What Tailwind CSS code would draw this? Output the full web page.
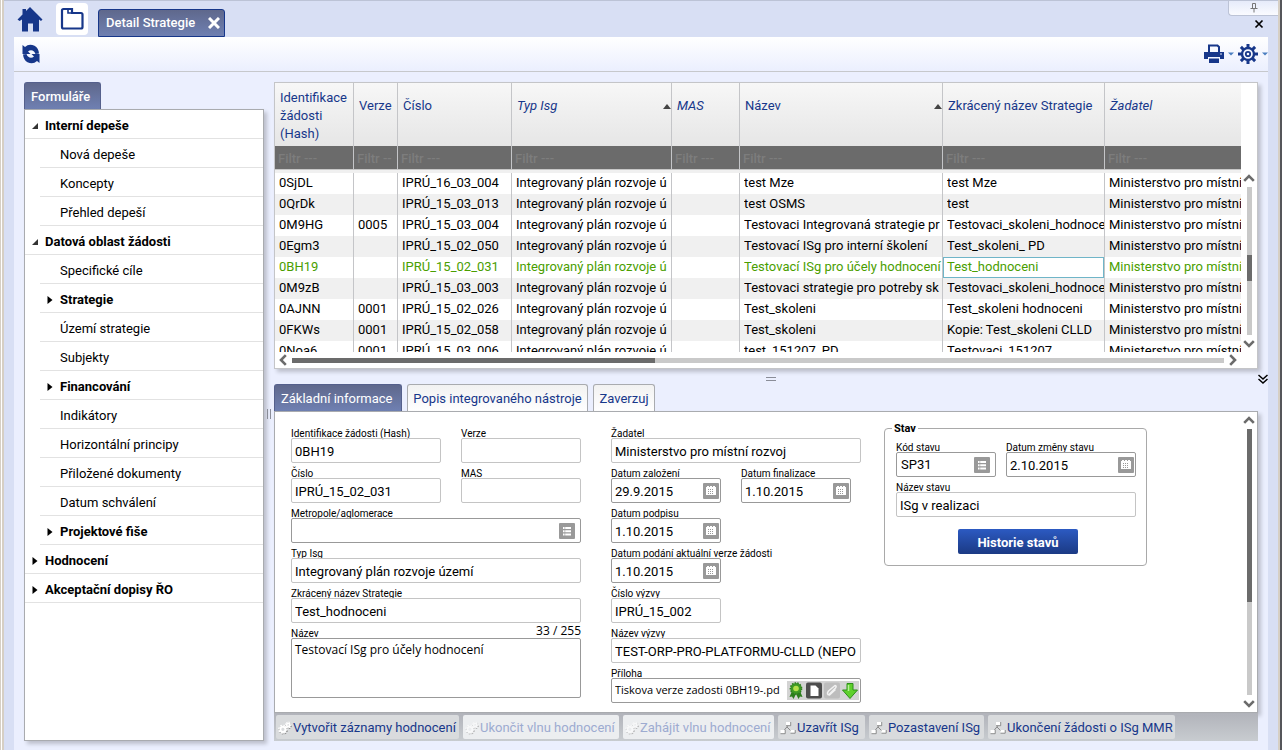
<!DOCTYPE html>
<html lang="cs">
<head>
<meta charset="utf-8">
<title>Detail Strategie</title>
<script src="https://cdn.jsdelivr.net/npm/@tailwindcss/browser@4"></script>
</head>
<body class="h-screen overflow-hidden border-r-2 border-l border-l-[#d6cfc4] border-r-[#55565a] bg-white pl-px font-['Roboto',sans-serif] text-[13px] text-black">
<svg class="hidden">
  <symbol id="i-list" viewBox="0 0 16 16"><rect width="16" height="16" rx="1" fill="#999"/><path d="M4 4h1.6v2H4zM4 7.2h1.6v2H4zM4 10.4h1.6v2H4zM6.2 4H12v2H6.2zM6.2 7.2H12v2H6.2zM6.2 10.4H12v2H6.2z" fill="#fff"/></symbol>
  <symbol id="i-cal" viewBox="0 0 16 16"><rect width="16" height="16" rx="1" fill="#999"/><path d="M3 4h1v-1h2v1h1v-1h2v1h1v-1h2v1h1v8H3z" fill="#fff"/><path d="M5 6.500h6M5 8.500h6M5 10.500h6" stroke="#999" stroke-width="1" stroke-dasharray="1 1"/></symbol>
  <symbol id="i-gears" viewBox="0 0 14 14"><g fill="none" stroke="#777"><circle cx="5.300" cy="9" r="3.600" stroke-width="1.800" stroke-dasharray="1.600 1.200"/><circle cx="10.800" cy="4.700" r="2.400" stroke-width="1.600" stroke-dasharray="1.200 1"/></g><g fill="none" stroke="#fff"><circle cx="4.900" cy="8.300" r="2.600" stroke-width="2"/><circle cx="4.900" cy="8.300" r="4" stroke-width="1.400" stroke-dasharray="1.600 1.540"/><circle cx="10.200" cy="4" r="1.600" stroke-width="1.600"/><circle cx="10.200" cy="4" r="2.800" stroke-width="1.200" stroke-dasharray="1.200 1"/></g></symbol>
  <symbol id="i-flow" viewBox="0 0 16 14"><path d="M8 4.500 4 9.500M7 6l4.500 4.500" fill="none" stroke="#8a8a8a"/><path d="M6 1h4.500v3.500H6zM.5 9H5v3.500H.5zM10.500 9H15v3h-4.500z" fill="#fff"/><path d="M6 4.700h4.700V1M.5 12.700h4.700V9M10.500 12.200h4.700V9" fill="none" stroke="#777" stroke-width=".8"/></symbol>
  <symbol id="i-up" viewBox="0 0 12 8"><path d="M1.200 6.800 6 2l4.800 4.800" fill="none" stroke="#6b6b6b" stroke-width="2.600"/></symbol>
  <symbol id="i-down" viewBox="0 0 12 8"><path d="M1.200 1.200 6 6l4.800-4.800" fill="none" stroke="#6b6b6b" stroke-width="2.600"/></symbol>
</svg>

<div class="flex h-full flex-col border-x-2 border-x-[#d6cfc4] bg-[#d8dff4]">
<header class="flex h-[37px] shrink-0 items-end border-t border-[#bcc3d6] pl-3">
  <button aria-label="Domů" class="mb-1 h-7 w-7"><svg viewBox="0 0 28 28" class="h-7 w-7" fill="#17378a"><path d="M14 2 26.500 14.500l-1.500 1.500-2-1.500V26.500h-6v-8h-5v8H6V14.500L3.500 16 1.500 14.500 6.500 9.500V4H10v2z"/></svg></button>
  <button aria-label="Složky" class="mb-0.5 ml-3 flex h-8 w-8 items-center justify-center rounded bg-white"><svg viewBox="0 0 24 24" class="h-6 w-6" fill="none" stroke="#17378a" stroke-width="2.200"><path d="M2 3.500q0-1.500 1.500-1.500H12v4h9q1.500 0 1.500 1.500v12.500q0 1.500-1.500 1.500H3.500Q2 21.500 2 20z" /><path d="M8 2v4h5" stroke-width="1.600"/></svg></button>
  <div class="ml-2.5 flex h-7 w-[127px] items-center justify-between rounded-t-[3px] border border-[#17378a] bg-linear-to-b from-[#5f688c] to-[#6f80b2] pr-1 pl-[7px] font-medium text-white">
    <span>Detail Strategie</span>
    <button aria-label="Zavřít kartu"><svg viewBox="0 0 12 12" class="h-3 w-3" stroke="#fff" stroke-width="3"><path d="M1 1l10 10M11 1 1 11"/></svg></button>
  </div>
  <div class="ml-auto flex w-[50px] flex-col items-end justify-between self-stretch">
    <button aria-label="Připnout" class="flex h-[15px] w-[50px] items-center justify-center rounded-bl border-b border-l border-[#bcc3d6] bg-linear-to-b from-[#e6ebfa] to-[#fafbff]"><svg viewBox="0 0 8 10" class="h-2.5 w-2" fill="none" stroke="#777"><path d="M2.500.5h3v5h-3zM.5 5.500h7M4 5.500V9.500"/></svg></button>
    <button aria-label="Zavřít" class="mr-[14px] mb-2"><svg viewBox="0 0 10 10" class="h-2.5 w-2.5" stroke="#000" stroke-width="1.700"><path d="M1.500 1.500l7 7M8.500 1.500l-7 7"/></svg></button>
  </div>
</header>

<div class="mr-2.5 ml-2.5 flex min-h-0 flex-1 flex-col bg-[#ebeffe]">
  <div class="flex h-[35px] shrink-0 items-center justify-between border-b border-[#c6c8cc] bg-linear-to-b from-white to-[#ebeffe] pl-[7px]">
    <button aria-label="Obnovit"><svg viewBox="0 0 20 20" class="h-5 w-5" fill="#17378a"><path d="M1.500 1v9h8L7 7.500q3-2.500 6 0 1 1 1.500 2.500l3.500-.5Q17.500 4 13.500 1.800 8-.8 4 3z"/><path d="M18.500 19v-9h-8l2.500 2.500q-3 2.500-6 0-1-1-1.500-2.500l-3.500.5q.5 5.500 4.500 7.700 5.500 2.600 9.500-1.200z"/></svg></button>
    <div class="flex items-center">
      <button aria-label="Tisk" class="flex items-center gap-1"><svg viewBox="0 0 20 20" class="h-5 w-5"><path d="M5 8V1.500h8.500L15 3v5" fill="none" stroke="#17378a" stroke-width="2"/><path d="M0 8h20v7h-4v-2H4v2H0zM5 14.500h10V19H5z" fill="#17378a"/><circle cx="17" cy="10" r=".8" fill="#fff"/></svg><svg viewBox="0 0 6 4" class="h-1 w-1.5"><path d="M0 .5h6L3 3.500z" fill="#4a7ec0"/></svg></button>
      <button aria-label="Nastavení" class="ml-1 flex items-center gap-1"><svg viewBox="0 0 20 20" class="h-5 w-5" fill="none" stroke="#17378a"><circle cx="10" cy="10" r="6" stroke-width="2.400"/><circle cx="10" cy="10" r="2.200" stroke-width="1.800"/><path d="M10 0v4M10 16v4M0 10h4M16 10h4M2.900 2.900l2.800 2.800M14.300 14.300l2.800 2.800M2.900 17.100l2.800-2.800M14.300 5.700l2.800-2.800" stroke-width="3"/></svg><svg viewBox="0 0 6 4" class="h-1 w-1.5"><path d="M0 .5h6L3 3.500z" fill="#4a7ec0"/></svg></button>
    </div>
  </div>

  <div class="flex min-h-0 flex-1 pt-2.5 pb-[9px] pl-2.5">
    <aside class="flex w-60 shrink-0 flex-col">
      <div class="flex h-[27px] w-[77px] items-center rounded-t-[3px] border border-b-0 border-[#55608c] bg-linear-to-b from-[#5f688c] to-[#6f80b2] pt-0.5 pl-1.5 font-medium text-white">Formuláře</div>
      <nav id="menu" class="flex-1 border border-[#a9abaf] bg-white shadow-[3px_3px_4px_rgba(0,0,0,0.2)]"></nav>
    </aside>
    <div class="flex w-2.5 shrink-0 items-center justify-center pt-1"><div class="h-2.5 w-1 border-x border-[#8a8d98]"></div></div>

    <main class="flex min-w-0 flex-1 flex-col">
      <div class="flex h-[287px] shrink-0">
        <section class="flex min-w-0 flex-1 border border-[#c4c5c8] bg-white shadow-[3px_3px_4px_rgba(0,0,0,0.2)]">
          <div class="flex min-w-0 flex-1 flex-col">
            <div class="min-h-0 flex-1 overflow-hidden">
              <table class="w-full table-fixed border-separate border-spacing-0 text-left">
                <colgroup><col class="w-[79px]"><col class="w-11"><col class="w-[114px]"><col class="w-40"><col class="w-[68px]"><col class="w-[203px]"><col class="w-[162px]"><col></colgroup>
                <thead>
                  <tr class="h-[63px] bg-linear-to-b from-[#f7f7f7] to-[#e6e6e6] text-[#17378a]" id="heads"></tr>
                  <tr class="h-[23px] bg-[#6b6b6b]" id="filters"></tr>
                  <tr class="h-1 bg-[#f0f0f0]"><td colspan="8" class="border-t border-[#c8c8c8] p-0"></td></tr>
                </thead>
                <tbody id="rows"></tbody>
              </table>
            </div>
            <div class="flex h-4 shrink-0 items-center pr-1 pl-1">
              <svg viewBox="0 0 8 12" class="h-3 w-2"><path d="M6.800 1.200 2 6l4.800 4.800" fill="none" stroke="#6b6b6b" stroke-width="2.600"/></svg>
              <div class="mx-[5px] h-[5px] flex-1 bg-[#c9c9c9]"><div class="h-full w-[39%] bg-[#6b6b6b]"></div></div>
              <svg viewBox="0 0 8 12" class="h-3 w-2"><path d="M1.200 1.200 6 6l-4.800 4.800" fill="none" stroke="#6b6b6b" stroke-width="2.600"/></svg>
            </div>
          </div>
          <div class="flex w-4 shrink-0 flex-col items-center pt-[91px] pb-5">
            <svg class="h-2 w-3 shrink-0"><use href="#i-up"/></svg>
            <div class="my-[5px] w-[5px] flex-1 bg-[#c9c9c9] pt-[68px]"><div class="h-[26px] bg-[#6b6b6b]"></div></div>
            <svg class="h-2 w-3 shrink-0"><use href="#i-down"/></svg>
          </div>
        </section>
        <div class="w-2.5 shrink-0"></div>
      </div>

      <div class="flex h-[15px] shrink-0 items-center pt-1 pl-2.5">
        <div class="flex flex-1 justify-center"><div class="h-1 w-2.5 border-y border-[#8a8d98]"></div></div>
        <button aria-label="Sbalit panel" class="w-2.5"><svg viewBox="0 0 10 10" class="h-2.5 w-2.5" fill="none" stroke="#000" stroke-width="1.500"><path d="M.5 1 5 5l4.500-4M.5 5 5 9l4.500-4"/></svg></button>
      </div>

      <div class="flex min-h-0 flex-1 flex-col pr-2.5">
        <div class="flex h-[27px] shrink-0 gap-[5px] whitespace-nowrap text-[#17378a]">
          <button class="w-32 rounded-t-[3px] border border-b-0 border-[#55608c] bg-linear-to-b from-[#5f688c] to-[#6f80b2] pt-0.5 pl-1.5 text-left text-white">Základní informace</button>
          <button class="w-[181px] rounded-t-[3px] border border-b-0 border-[#a9abaf] bg-linear-to-b from-[#f2f2f2] to-white pt-0.5">Popis integrovaného nástroje</button>
          <button class="w-[62px] rounded-t-[3px] border border-b-0 border-[#a9abaf] bg-linear-to-b from-[#f2f2f2] to-white pt-0.5">Zaverzuj</button>
        </div>
        <form class="flex min-h-0 flex-1 justify-between border border-[#a9abaf] bg-white shadow-[3px_3px_4px_rgba(0,0,0,0.2)]">
          <div class="flex items-start pt-[11px] pl-4">
            <div class="w-[290px]">
              <div class="flex gap-5">
                <div class="flex h-10 w-[150px] flex-col pt-1.5"><label for="f1" class="text-[10px] leading-[9px] whitespace-nowrap">Identifikace žádosti (Hash)</label><input id="f1" value="0BH19" class="h-[25px] w-full rounded-[2px] border border-[#c4c4c4] px-[3px] pt-0.5"></div>
                <div class="flex h-10 w-[120px] flex-col pt-1.5"><label for="f2" class="text-[10px] leading-[9px] whitespace-nowrap">Verze</label><input id="f2" class="h-[25px] w-full rounded-[2px] border border-[#c4c4c4] px-[3px] pt-0.5"></div>
              </div>
              <div class="flex gap-5">
                <div class="flex h-10 w-[150px] flex-col pt-1.5"><label for="f3" class="text-[10px] leading-[9px] whitespace-nowrap">Číslo</label><input id="f3" value="IPRÚ_15_02_031" class="h-[25px] w-full rounded-[2px] border border-[#c4c4c4] px-[3px] pt-0.5"></div>
                <div class="flex h-10 w-[120px] flex-col pt-1.5"><label for="f4" class="text-[10px] leading-[9px] whitespace-nowrap">MAS</label><input id="f4" class="h-[25px] w-full rounded-[2px] border border-[#c4c4c4] px-[3px] pt-0.5"></div>
              </div>
              <div class="flex h-10 flex-col pt-1.5"><label for="f5" class="text-[10px] leading-[9px] whitespace-nowrap">Metropole/aglomerace</label><div class="flex h-[25px] items-center rounded-[2px] border border-[#999] pr-[5px]"><input id="f5" class="min-w-0 flex-1 px-[3px] pt-0.5"><button type="button" aria-label="Vybrat metropoli"><svg class="h-4 w-4"><use href="#i-list"/></svg></button></div></div>
              <div class="flex h-10 flex-col pt-1.5"><label for="f6" class="text-[10px] leading-[9px] whitespace-nowrap">Typ Isg</label><input id="f6" value="Integrovaný plán rozvoje území" class="h-[25px] w-full rounded-[2px] border border-[#c4c4c4] px-[3px] pt-0.5"></div>
              <div class="flex h-10 flex-col pt-1.5"><label for="f7" class="text-[10px] leading-[9px] whitespace-nowrap">Zkrácený název Strategie</label><input id="f7" value="Test_hodnoceni" class="h-[25px] w-full rounded-[2px] border border-[#c4c4c4] px-[3px] pt-0.5"></div>
              <div class="flex flex-col pt-1.5"><div class="flex h-[9px] items-end justify-between"><label for="f8" class="text-[10px] leading-[9px] whitespace-nowrap">Název</label><span class="pb-0.5 font-['Open_Sans',sans-serif] text-xs leading-[10px]">33 / 255</span></div><textarea id="f8" class="h-15 w-full resize-none rounded-[2px] border border-[#999] px-[3px] pt-[3px] font-['Open_Sans',sans-serif] text-xs leading-4">Testovací ISg pro účely hodnocení</textarea></div>
            </div>

            <div class="ml-[30px] w-[250px]">
              <div class="flex h-10 flex-col pt-1.5"><label for="g1" class="text-[10px] leading-[9px] whitespace-nowrap">Žadatel</label><input id="g1" value="Ministerstvo pro místní rozvoj" class="h-[25px] w-full rounded-[2px] border border-[#c4c4c4] px-[3px] pt-0.5"></div>
              <div class="flex gap-5">
                <div class="flex h-10 w-[110px] flex-col pt-1.5"><label for="g2" class="text-[10px] leading-[9px] whitespace-nowrap">Datum založení</label><div class="flex h-[25px] items-center rounded-[2px] border border-[#999] pr-px"><input id="g2" value="29.9.2015" class="min-w-0 flex-1 px-[3px] pt-0.5"><button type="button" aria-label="Kalendář"><svg class="h-4 w-4"><use href="#i-cal"/></svg></button></div></div>
                <div class="flex h-10 w-[110px] flex-col pt-1.5"><label for="g3" class="text-[10px] leading-[9px] whitespace-nowrap">Datum finalizace</label><div class="flex h-[25px] items-center rounded-[2px] border border-[#999] pr-px"><input id="g3" value="1.10.2015" class="min-w-0 flex-1 px-[3px] pt-0.5"><button type="button" aria-label="Kalendář"><svg class="h-4 w-4"><use href="#i-cal"/></svg></button></div></div>
              </div>
              <div class="flex h-10 w-[110px] flex-col pt-1.5"><label for="g4" class="text-[10px] leading-[9px] whitespace-nowrap">Datum podpisu</label><div class="flex h-[25px] items-center rounded-[2px] border border-[#999] pr-px"><input id="g4" value="1.10.2015" class="min-w-0 flex-1 px-[3px] pt-0.5"><button type="button" aria-label="Kalendář"><svg class="h-4 w-4"><use href="#i-cal"/></svg></button></div></div>
              <div class="flex h-10 w-[110px] flex-col pt-1.5"><label for="g5" class="text-[10px] leading-[9px] whitespace-nowrap">Datum podání aktuální verze žádosti</label><div class="flex h-[25px] items-center rounded-[2px] border border-[#999] pr-px"><input id="g5" value="1.10.2015" class="min-w-0 flex-1 px-[3px] pt-0.5"><button type="button" aria-label="Kalendář"><svg class="h-4 w-4"><use href="#i-cal"/></svg></button></div></div>
              <div class="flex h-10 w-[110px] flex-col pt-1.5"><label for="g6" class="text-[10px] leading-[9px] whitespace-nowrap">Číslo výzvy</label><input id="g6" value="IPRÚ_15_002" class="h-[25px] w-full rounded-[2px] border border-[#c4c4c4] px-[3px] pt-0.5"></div>
              <div class="flex h-10 flex-col pt-1.5"><label for="g7" class="text-[10px] leading-[9px] whitespace-nowrap">Název výzvy</label><input id="g7" value="TEST-ORP-PRO-PLATFORMU-CLLD (NEPO" class="h-[25px] w-full rounded-[2px] border border-[#c4c4c4] pt-0.5 pl-[3px]"></div>
              <div class="flex h-10 flex-col pt-1.5"><label for="g8" class="text-[10px] leading-[9px] whitespace-nowrap">Příloha</label>
                <div class="flex h-[25px] items-center rounded-[2px] border border-[#999] pr-px"><input id="g8" value="Tiskova verze zadosti 0BH19-.pd" class="min-w-0 flex-1 pl-[3px] font-['Open_Sans',sans-serif] text-[11px]">
                  <div class="ml-px flex bg-[#d3d3d3]">
                    <button type="button" aria-label="Podpis" class="h-[19px] w-[18px]"><svg viewBox="0 0 18 19" class="h-[19px] w-[18px]"><path d="M5 10 2.500 16l2.500-.5L6.500 18 9 13l2.500 5 1.500-2.500 2.500.5L13 10z" fill="#2c7d1c"/><circle cx="9" cy="7.500" r="5.600" fill="#3f9a25"/><circle cx="9" cy="7.500" r="5.600" fill="none" stroke="#2c7d1c" stroke-width="1.500" stroke-dasharray="1.500 1.200"/><circle cx="9" cy="7.500" r="2.800" fill="#b5e04a"/></svg></button>
                    <button type="button" aria-label="Soubor" class="h-[19px] w-[18px]"><svg viewBox="0 0 18 19" class="h-[19px] w-[18px]"><rect x="1" y="1.500" width="16" height="16" rx="2" fill="#4d4d4d"/><path d="M5.500 4.500h5l3 3v7.500h-8z" fill="#fff"/></svg></button>
                    <button type="button" aria-label="Připojit" class="h-[19px] w-[18px]"><svg viewBox="0 0 18 19" class="h-[19px] w-[18px]"><rect x="1" y="1.500" width="16" height="16" rx="2" fill="#bdbdbd"/><path d="M6 13.500 12.500 7q1.500-2-.5-2.500L5.500 10q-2.500 3.500 1 4l6-5.500" fill="none" stroke="#f2f2f2" stroke-width="1.500"/></svg></button>
                    <button type="button" aria-label="Stáhnout" class="h-[19px] w-[18px]"><svg viewBox="0 0 18 19" class="h-[19px] w-[18px]"><path d="M6 2.500h6V9h4.500L9 17.500 1.500 9H6z" fill="#5fd02c" stroke="#2d8f1a"/><path d="M7.500 4v6" stroke="#b8f29a" stroke-width="1.500"/></svg></button>
                  </div>
                </div>
              </div>
            </div>

            <fieldset class="ml-[23px] h-[143px] w-[263px] rounded border border-[#a9a9a9] pr-2.5 pl-[11px]">
              <legend class="-ml-1 px-0.5 text-[11px] leading-[11px] font-bold">Stav</legend>
              <div class="mt-[3px] flex gap-2.5">
                <div class="flex h-10 w-[100px] flex-col pt-1.5"><label for="h1" class="text-[10px] leading-[9px] whitespace-nowrap">Kód stavu</label><div class="flex h-[25px] items-center rounded-[2px] border border-[#999] pr-[5px]"><input id="h1" value="SP31" class="min-w-0 flex-1 px-1"><button type="button" aria-label="Vybrat stav"><svg class="h-4 w-4"><use href="#i-list"/></svg></button></div></div>
                <div class="flex h-10 w-[130px] flex-col pt-1.5"><label for="h2" class="text-[10px] leading-[9px] whitespace-nowrap">Datum změny stavu</label><div class="flex h-[25px] items-center rounded-[2px] border border-[#999] pr-px"><input id="h2" value="2.10.2015" class="min-w-0 flex-1 px-[3px] pt-0.5"><button type="button" aria-label="Kalendář"><svg class="h-4 w-4"><use href="#i-cal"/></svg></button></div></div>
              </div>
              <div class="flex h-10 w-full flex-col pt-1.5"><label for="h3" class="text-[10px] leading-[9px] whitespace-nowrap">Název stavu</label><input id="h3" value="ISg v realizaci" class="h-[25px] w-full rounded-[2px] border border-[#c4c4c4] px-[3px] pt-0.5"></div>
              <button type="button" class="mt-3 ml-[62px] block h-[25px] w-[120px] rounded-[2px] bg-linear-to-b from-[#2c5ac2] to-[#1b3a84] pt-0.5 font-bold text-white">Historie stavů</button>
            </fieldset>
          </div>
          <div class="flex w-4 flex-col items-center py-1">
            <svg class="h-2 w-3 shrink-0"><use href="#i-up"/></svg>
            <div class="my-[5px] w-[5px] flex-1 bg-[#c9c9c9]"><div class="h-[65%] bg-[#6b6b6b]"></div></div>
            <svg class="h-2 w-3 shrink-0"><use href="#i-down"/></svg>
          </div>
        </form>
        <footer class="flex h-7 shrink-0 items-center gap-1 bg-linear-to-b from-[#b1b3ba] to-[#c8ccd0] px-0.5 whitespace-nowrap text-[#17378a]">
          <button class="flex h-6 w-[183px] items-center gap-px rounded-[2px] bg-[#d9dbdd] pt-0.5 pl-0.5"><svg class="h-3.5 w-3.5 shrink-0"><use href="#i-gears"/></svg>Vytvořit záznamy hodnocení</button>
          <button disabled class="flex h-6 w-[156px] items-center gap-px rounded-[2px] bg-[#eceef0] pt-0.5 pl-0.5 text-[#9dabd0]"><svg class="h-3.5 w-3.5 shrink-0 opacity-60"><use href="#i-gears"/></svg>Ukončit vlnu hodnocení</button>
          <button disabled class="flex h-6 w-[151px] items-center gap-px rounded-[2px] bg-[#eceef0] pt-0.5 pl-0.5 text-[#9dabd0]"><svg class="h-3.5 w-3.5 shrink-0 opacity-60"><use href="#i-gears"/></svg>Zahájit vlnu hodnocení</button>
          <button class="flex h-6 w-[87px] items-center gap-px rounded-[2px] bg-[#d9dbdd] pt-0.5 pl-0.5"><svg class="h-3.5 w-4 shrink-0"><use href="#i-flow"/></svg>Uzavřít ISg</button>
          <button class="flex h-6 w-[115px] items-center gap-px rounded-[2px] bg-[#d9dbdd] pt-0.5 pl-0.5"><svg class="h-3.5 w-4 shrink-0"><use href="#i-flow"/></svg>Pozastavení ISg</button>
          <button class="flex h-6 w-[187px] items-center gap-px rounded-[2px] bg-[#d9dbdd] pt-0.5 pl-0.5"><svg class="h-3.5 w-4 shrink-0"><use href="#i-flow"/></svg>Ukončení žádosti o ISg MMR</button>
        </footer>
      </div>
    </main>
  </div>
</div>
</div>

<script>
// Menu entries: [label, level, arrow]
const menu = [
  ["Interní depeše", 0, "open"], ["Nová depeše", 1, ""], ["Koncepty", 1, ""], ["Přehled depeší", 1, ""],
  ["Datová oblast žádosti", 0, "open"], ["Specifické cíle", 1, ""], ["Strategie", 1, "closed"], ["Území strategie", 1, ""],
  ["Subjekty", 1, ""], ["Financování", 1, "closed"], ["Indikátory", 1, ""], ["Horizontální principy", 1, ""],
  ["Přiložené dokumenty", 1, ""], ["Datum schválení", 1, ""], ["Projektové fiše", 1, "closed"],
  ["Hodnocení", 0, "closed"], ["Akceptační dopisy ŘO", 0, "closed"]
];
const arrows = {
  open: '<svg viewBox="0 0 6 6" class="h-1.5 w-1.5"><path d="M6 0v6H0z" fill="#333"/></svg>',
  closed: '<svg viewBox="0 0 6 8" class="h-2 w-1.5"><path d="M.5 0 5.500 4 .5 8z" fill="#000"/></svg>',
  "": ""
};
document.getElementById("menu").innerHTML = menu.map(([text, level, arrow]) =>
  `<a href="#" class="${level ? "ml-[15px]" : ""} flex h-[29px] items-center border-b border-[#e2e2e2] pt-1 pl-[7px] ${arrow ? "font-bold" : ""}"><span class="flex w-[13px] items-center">${arrows[arrow]}</span>${text}</a>`).join("");

const heads = [["Identifikace žádosti (Hash)"], ["Verze"], ["Číslo"], ["Typ Isg", "i", "s"], ["MAS", "i"], ["Název", "", "s"], ["Zkrácený název Strategie"], ["Žadatel", "i"]];
document.getElementById("heads").innerHTML = heads.map(([text, it, sort], i) =>
  `<th scope="col" class="${i < 7 ? "border-r border-[#c4c5c8]" : ""} overflow-hidden p-0 pl-[5px] align-top font-normal"><div class="flex items-center justify-between ${i ? "pt-3.5" : "pt-1.5"} leading-[18px]"><span class="${it ? "italic" : ""} ${i ? "whitespace-nowrap" : ""}">${text}</span>${sort ? '<svg viewBox="0 0 8 5" class="h-[5px] w-2"><path d="M4 0l4 5H0z" fill="#444"/></svg>' : ""}</div></th>`).join("");
document.getElementById("filters").innerHTML = heads.map(([text], i) =>
  `<td class="${i < 7 ? "border-r border-[#c4c5c8]" : ""} overflow-hidden p-0"><input aria-label="Filtr: ${text}" placeholder="${i === 1 ? "Filtr --" : "Filtr ---"}" class="block h-5 w-full pt-0.5 pl-[3px] font-medium placeholder:text-[#7d7d7d]"></td>`).join("");

const rows = [
  ["0SjDL", "", "IPRÚ_16_03_004", "test Mze", "test Mze"],
  ["0QrDk", "", "IPRÚ_15_03_013", "test OSMS", "test"],
  ["0M9HG", "0005", "IPRÚ_15_03_004", "Testovaci Integrovaná strategie pr", "Testovaci_skoleni_hodnoce"],
  ["0Egm3", "", "IPRÚ_15_02_050", "Testovací ISg pro interní školení", "Test_skoleni_ PD"],
  ["0BH19", "", "IPRÚ_15_02_031", "Testovací ISg pro účely hodnocení", "Test_hodnoceni"],
  ["0M9zB", "", "IPRÚ_15_03_003", "Testovaci strategie pro potreby sk", "Testovaci_skoleni_hodnoce"],
  ["0AJNN", "0001", "IPRÚ_15_02_026", "Test_skoleni", "Test_skoleni hodnoceni"],
  ["0FKWs", "0001", "IPRÚ_15_02_058", "Test_skoleni", "Kopie: Test_skoleni CLLD"],
  ["0Noa6", "0001", "IPRÚ_15_03_006", "test_151207_PD", "Testovaci_151207"]
];
document.getElementById("rows").innerHTML = rows.map((r, n) => {
  const cells = [r[0], r[1], r[2], "Integrovaný plán rozvoje ú", "", r[3], r[4], "Ministerstvo pro místní"];
  return `<tr class="${n % 2 ? "bg-[#f0f0f0]" : "bg-white"} ${n === 4 ? "text-[#4a9e00]" : ""}">` + cells.map((c, i) =>
    `<td class="${i < 7 ? "border-r border-[#c4c5c8]" : ""} p-0"><div class="h-[21px] ${n === 4 && i === 6 ? "border border-[#6fb5c8] pl-[3px] leading-[17px]" : "ml-1 leading-[19px]"} overflow-hidden whitespace-nowrap">${c}</div></td>`).join("") + "</tr>";
}).join("");
</script>
</body>
</html>
